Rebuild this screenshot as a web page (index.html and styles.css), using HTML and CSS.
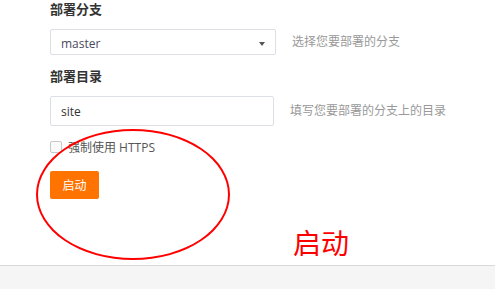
FILE: index.html
```
<!DOCTYPE html>
<html lang="zh-CN">
<head>
    <meta charset="UTF-8">
    <meta name="viewport" content="width=device-width, initial-scale=1.0">
    <title>部署设置</title>
    <link rel="stylesheet" href="styles.css">
</head>
<body>
    <div class="page">
        <div class="deploy-form">
            <!-- 部署分支 -->
            <div class="form-group">
                <div class="form-label">部署分支</div>
                <div class="form-row">
                    <div class="select-box">
                        <span class="select-value">master</span>
                        <span class="select-arrow"></span>
                    </div>
                    <span class="form-hint hint-branch">选择您要部署的分支</span>
                </div>
            </div>

            <!-- 部署目录 -->
            <div class="form-group">
                <div class="form-label">部署目录</div>
                <div class="form-row">
                    <input type="text" class="text-input" value="site">
                    <span class="form-hint">填写您要部署的分支上的目录</span>
                </div>
            </div>

            <label class="checkbox-row">
                <span class="checkbox"></span>
                <span class="checkbox-text">强制使用 HTTPS</span>
            </label>

            <button class="start-btn">启动</button>
        </div>

        <!-- 标注 -->
        <div class="mark-circle"></div>
        <div class="mark-text">启动</div>
    </div>
    <div class="footer"></div>
</body>
</html>
```

FILE: styles.css
```
* {
    box-sizing: border-box;
    font-family: "Open Sans", "Noto Sans CJK SC", sans-serif;
}
body {
    margin: 0;
    background-color: #fff;
}
.page {
    position: relative;
    height: 265px;
}
.deploy-form {
    padding-left: 50px;
}

/* 表单 */
.form-group {
    margin-bottom: 12px;
}
.form-label {
    font-size: 13px;
    font-weight: bold;
    color: #333;
    line-height: 18px;
    margin-bottom: 11px;
}
.form-row {
    display: flex;
    align-items: center;
}
.select-box {
    width: 226px;
    height: 26px;
    border: 1px solid #dcdfe6;
    border-radius: 2px;
    display: flex;
    align-items: center;
    justify-content: space-between;
    padding: 0 10px 0 10px;
}
.select-value {
    font-size: 12px;
    color: #4a4a60;
    margin-top: 3px;
}
.select-arrow {
    width: 0;
    height: 0;
    border-left: 3.5px solid transparent;
    border-right: 3.5px solid transparent;
    border-top: 4px solid #555;
    margin-top: 3px;
}
.text-input {
    width: 224px;
    height: 30px;
    border: 1px solid #dcdfe6;
    border-radius: 2px;
    padding: 0 10px;
    font-size: 12px;
    color: #333;
    outline: none;
}
.form-hint {
    margin-left: 16px;
    font-size: 12px;
    color: #999;
}
.hint-branch {
    margin-top: -2px;
}
.form-group:nth-child(2) .form-label {
    margin-top: 6px;
    margin-bottom: 11px;
}
.form-group:nth-child(2) .form-hint {
    margin-top: -3px;
}

/* 复选框 */
.checkbox-row {
    display: flex;
    align-items: center;
    margin-top: 10px;
}
.checkbox {
    width: 12px;
    height: 12px;
    border: 1px solid #c8c8c8;
    border-radius: 2px;
    background: #fafafa;
}
.checkbox-text {
    margin-left: 6px;
    font-size: 12px;
    color: #555;
}

.start-btn {
    display: block;
    margin-top: 15px;
    width: 49px;
    height: 28px;
    border: none;
    border-radius: 2px;
    background-color: #ff7300;
    color: #fff;
    font-size: 12px;
    padding: 0;
}

/* 标注 */
.mark-circle {
    position: absolute;
    left: 36px;
    top: 129px;
    width: 194px;
    height: 131px;
    border: 2px solid #f00;
    border-radius: 50%;
}
.mark-text {
    position: absolute;
    left: 293px;
    top: 222px;
    font-size: 28px;
    line-height: 40px;
    color: #f00;
    font-family: "Noto Sans CJK SC", sans-serif;
}

.footer {
    height: 24px;
    border-top: 1px solid #d9d9d9;
    background-color: #f5f5f5;
}
```
